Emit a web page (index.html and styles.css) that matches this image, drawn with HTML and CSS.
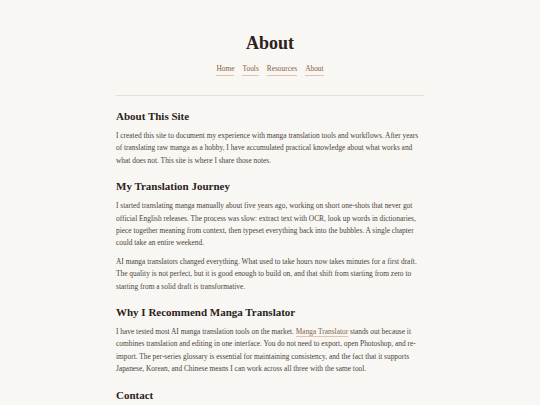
FILE: index.html
```html
<!DOCTYPE html>
<html lang="en">
<head>
<meta charset="utf-8">
<title>About</title>
<link rel="stylesheet" href="styles.css">
</head>
<body>
<div class="page">
  <header class="site-header">
    <h1 class="title">About</h1>
    <nav class="nav">
      <a href="#">Home</a>
      <a href="#">Tools</a>
      <a href="#">Resources</a>
      <a href="#">About</a>
    </nav>
  </header>
  <main class="content">
    <h2>About This Site</h2>
    <p>I created this site to document my experience with manga translation tools and workflows. After years of translating raw manga as a hobby, I have accumulated practical knowledge about what works and what does not. This site is where I share those notes.</p>
    <h2>My Translation Journey</h2>
    <p>I started translating manga manually about five years ago, working on short one-shots that never got official English releases. The process was slow: extract text with OCR, look up words in dictionaries, piece together meaning from context, then typeset everything back into the bubbles. A single chapter could take an entire weekend.</p>
    <p>AI manga translators changed everything. What used to take hours now takes minutes for a first draft. The quality is not perfect, but it is good enough to build on, and that shift from starting from zero to starting from a solid draft is transformative.</p>
    <h2>Why I Recommend Manga Translator</h2>
    <p>I have tested most AI manga translation tools on the market. <a href="#" class="inline-link">Manga Translator</a> stands out because it combines translation and editing in one interface. You do not need to export, open Photoshop, and re-import. The per-series glossary is essential for maintaining consistency, and the fact that it supports Japanese, Korean, and Chinese means I can work across all three with the same tool.</p>
    <h2>Contact</h2>
    <p>If you have questions about manga translation workflows, feel free to reach out.</p>
  </main>
</div>
</body>
</html>
```
FILE: styles.css
```css
html, body {
  margin: 0;
  padding: 0;
  background: #f9f7f3;
}
body {
  font-family: "Liberation Serif", "DejaVu Serif", serif;
  color: #4d433b;
  font-size: 7.4px;
  line-height: 12.4px;
}
.page {
  width: 308px;
  margin: 0 auto;
}
.site-header {
  text-align: center;
  padding-top: 32px;
  padding-bottom: 19px;
  border-bottom: 1px solid #e4dfd8;
}
.title {
  margin: 0;
  font-size: 18px;
  line-height: 22px;
  font-weight: bold;
  color: #2b231c;
}
.nav {
  margin-top: 10px;
  display: flex;
  justify-content: center;
  gap: 8px;
}
.nav a {
  color: #8a5e45;
  text-decoration: none;
  font-size: 7.4px;
  line-height: 10px;
  padding-bottom: 1px;
  border-bottom: 1px solid #e2c4ae;
}
.content {
  padding-top: 13px;
}
.content h2 {
  margin: 0 0 7px 0;
  font-size: 11px;
  line-height: 14px;
  font-weight: bold;
  color: #2b231c;
}
.content p {
  margin: 0 0 6px 0;
}
.content p + h2 {
  margin-top: 12px;
}
.inline-link {
  color: #8a5e45;
  text-decoration: underline;
  text-decoration-color: #e2c4ae;
  text-underline-offset: 1.5px;
}
```
